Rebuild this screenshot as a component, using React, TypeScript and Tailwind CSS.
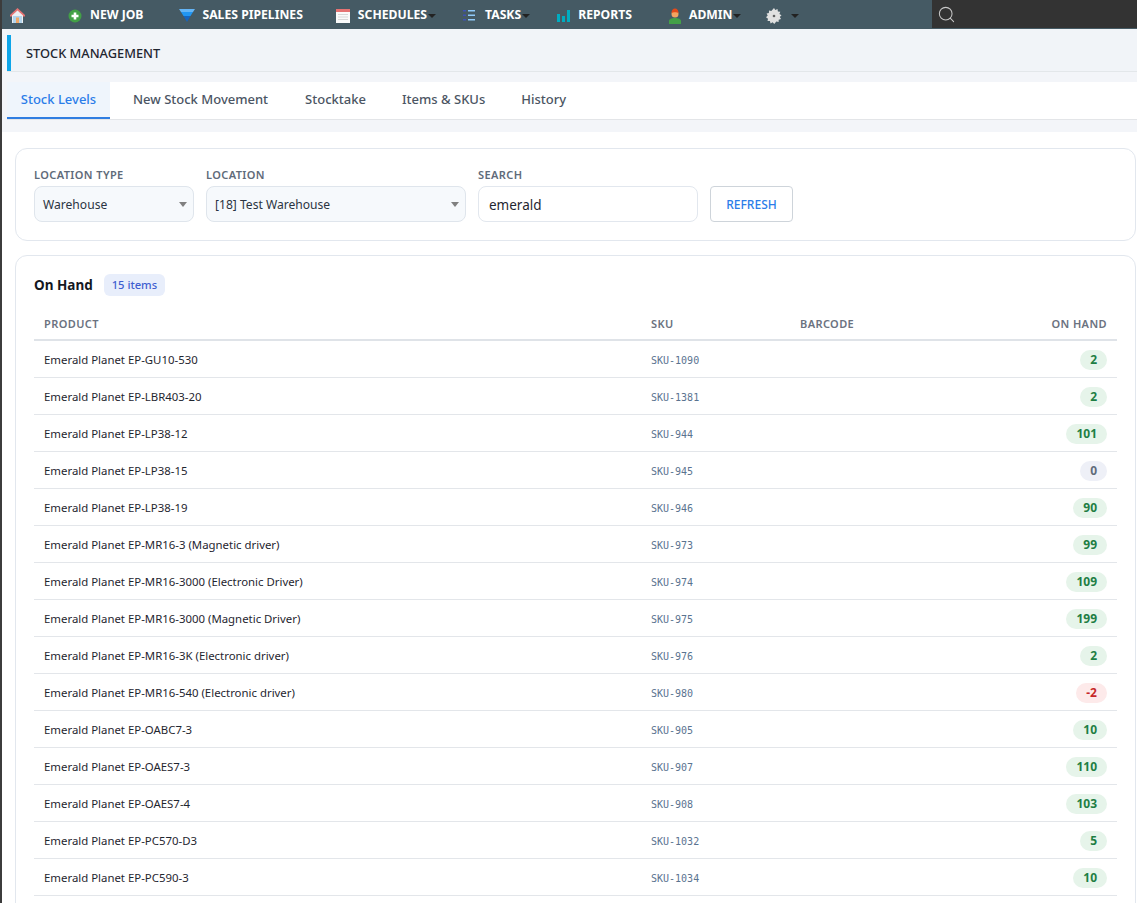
import { Search } from "lucide-react";

const rows = [
  { name: "Emerald Planet EP-GU10-530", sku: "SKU-1090", qty: 2 },
  { name: "Emerald Planet EP-LBR403-20", sku: "SKU-1381", qty: 2 },
  { name: "Emerald Planet EP-LP38-12", sku: "SKU-944", qty: 101 },
  { name: "Emerald Planet EP-LP38-15", sku: "SKU-945", qty: 0 },
  { name: "Emerald Planet EP-LP38-19", sku: "SKU-946", qty: 90 },
  { name: "Emerald Planet EP-MR16-3 (Magnetic driver)", sku: "SKU-973", qty: 99 },
  { name: "Emerald Planet EP-MR16-3000 (Electronic Driver)", sku: "SKU-974", qty: 109 },
  { name: "Emerald Planet EP-MR16-3000 (Magnetic Driver)", sku: "SKU-975", qty: 199 },
  { name: "Emerald Planet EP-MR16-3K (Electronic driver)", sku: "SKU-976", qty: 2 },
  { name: "Emerald Planet EP-MR16-540 (Electronic driver)", sku: "SKU-980", qty: -2 },
  { name: "Emerald Planet EP-OABC7-3", sku: "SKU-905", qty: 10 },
  { name: "Emerald Planet EP-OAES7-3", sku: "SKU-907", qty: 110 },
  { name: "Emerald Planet EP-OAES7-4", sku: "SKU-908", qty: 103 },
  { name: "Emerald Planet EP-PC570-D3", sku: "SKU-1032", qty: 5 },
  { name: "Emerald Planet EP-PC590-3", sku: "SKU-1034", qty: 10 },
];

function Caret() {
  return <span className="ml-[1px] mt-[1px] w-0 h-0 border-x-[4px] border-x-transparent border-t-[4px] border-t-[#222]" />;
}

function SelectBox({ label, value, width }: { label: string; value: string; width: string }) {
  return (
    <div className={width}>
      <div className="text-[11px] leading-[15px] font-semibold tracking-[0.4px] text-[#5f6b7a] mb-[4px]">{label}</div>
      <div className="h-[36px] rounded-[8px] border border-[#dfe5ec] bg-[#f6f9fc] flex items-center justify-between pl-[8px] pr-[6px] text-[12.100px] text-[#2b3442]">
        <span className="mt-[2px]">{value}</span>
        <span className="w-0 h-0 border-x-[4px] border-x-transparent border-t-[5px] border-t-[#808080]" />
      </div>
    </div>
  );
}

function QtyBadge({ qty }: { qty: number }) {
  const tone = qty < 0 ? "bg-[#fdeaea] text-[#c62828]" : qty === 0 ? "bg-[#eef0f7] text-[#5f6b7a]" : "bg-[#e6f4ea] text-[#1e7e44]";
  return <span className={`block w-fit ml-auto h-[20px] leading-[20px] rounded-full px-[10px] text-[12px] font-bold ${tone}`}>{qty}</span>;
}

export default function App() {
  return (
    <div className="relative h-[903px] overflow-hidden bg-white font-['Noto_Sans',sans-serif] text-[#1f2630]">
      {/* window edge */}
      <div className="absolute left-0 top-0 w-[2px] h-full bg-[#3c3c3c]" />

      <header className="h-[29px] bg-[#455a64] flex text-[12.200px] font-bold text-white">
        <div className="relative w-[932px] pt-[2px] flex items-center">
          <svg className="ml-[9px] w-[17px] h-[17px]" viewBox="0 0 17 17">
            <path d="M1 8 8.500 1 16 8v1.500H1z" fill="#e57373" />
            <path d="M3 8.500 8.500 3.500 14 8.500V16H3z" fill="#eceff1" />
            <path d="M4 9h9v7H4z" fill="#b3d4ec" />
            <path d="M7 10.500h3V16H7z" fill="#f0a868" />
          </svg>
          <svg className="ml-[42px] w-[14px] h-[14px]" viewBox="0 0 14 14">
            <circle cx="7" cy="7" r="6.500" fill="#43a047" />
            <path d="M5.700 3.500h2.600v2.200h2.200v2.600H8.300v2.200H5.700V8.300H3.500V5.700h2.200z" fill="#fff" />
          </svg>
          <span className="ml-[8px]">NEW JOB</span>
          <svg className="ml-[36px] w-[16px] h-[13px]" viewBox="0 0 16 13">
            <path d="M0 0h16l-2 3H2z" fill="#64b5f6" />
            <path d="M2 3h12l-2.500 4h-7z" fill="#2196f3" />
            <path d="M4.500 7h7L8 13z" fill="#1565c0" />
          </svg>
          <span className="ml-[7px]">SALES PIPELINES</span>
          <svg className="ml-[33px] w-[14px] h-[14px]" viewBox="0 0 14 14">
            <path d="M0 0h14v14H0z" fill="#fafafa" />
            <path d="M0 0h14v3H0z" fill="#e57373" />
            <path d="M2 5h10v1H2zM2 7.500h10v1H2zM2 10h10v1H2z" fill="#d7d7d7" />
          </svg>
          <span className="ml-[8px]">SCHEDULES</span>
          <Caret />
          <svg className="ml-[26px] w-[14px] h-[13px]" viewBox="0 0 14 13">
            <path d="M1 1h3v1.500H1zM1 5.500h3V7H1zM1 10h3v1.500H1z" fill="#3f51b5" />
            <path d="M6 1h7v1.500H6zM6 5.500h7V7H6zM6 10h7v1.500H6z" fill="#90caf9" />
          </svg>
          <span className="ml-[9px]">TASKS</span>
          <Caret />
          <svg className="ml-[27px] w-[13px] h-[13px]" viewBox="0 0 13 13">
            <path d="M0 5h3v8H0zM5 7h3v6H5zM10 1h3v12h-3z" fill="#00acc1" />
          </svg>
          <span className="ml-[8px]">REPORTS</span>
          <svg className="ml-[36px] w-[14px] h-[16px]" viewBox="0 0 14 16">
            <path d="M1 16v-3c0-2 3-3 6-3s6 1 6 3v3z" fill="#43a047" />
            <circle cx="7" cy="6" r="3.500" fill="#f4a460" />
            <path d="M3.500 5C3.500 2 5 .5 7 .5S10.500 2 10.500 5C9 4 5 4 3.500 5z" fill="#e64a19" />
          </svg>
          <span className="ml-[7px]">ADMIN</span>
          <Caret />
          <svg className="ml-[25px] w-[16px] h-[16px]" viewBox="0 0 16 16">
            <path d="M8 0l1.300 2 2.200-1 .4 2.400 2.400.3-.9 2.200 2.100 1.300-1.700 1.700 1.200 2-2.300.8-.1 2.400-2.300-.5L8.300 16l-1.700-1.700-2 1.100-.7-2.300-2.400-.1.500-2.300L0 9.300l1.700-1.700L.6 5.600l2.300-.7.100-2.400 2.300.5z" fill="#e0e0e0" />
            <circle cx="8" cy="8" r="1.300" fill="#616161" />
          </svg>
          <span className="ml-[9px] w-0 h-0 border-x-[4px] border-x-transparent border-t-[4px] border-t-[#222]" />
        </div>
        <div className="flex-1 bg-[#333333] h-[28px] flex items-center pl-[5px] text-[#c8c8c8]">
          <Search size={19} strokeWidth={1.3} />
        </div>
      </header>

      <div className="bg-[#f3f5f9] pl-[7px] pb-[12px]">
        <div className="h-[43px] pt-[6px] border-b border-[#e3e7ea] bg-[#f1f4f8]">
          <div className="h-[36px] border-l-[4px] border-l-[#0ea5e9] flex items-center pl-[15px] pt-[1px] text-[12.800px] font-medium text-[#1f2630]">
            STOCK MANAGEMENT
          </div>
        </div>
        <nav className="mt-[10px] h-[38px] bg-white border-b border-[#e3e5e8] flex text-[13px] font-medium text-[#4b5563]">
          <div className="w-[103px] h-[37px] bg-[#eff5fc] border-b-[2px] border-[#2f7de1] text-[#2b7de9] flex items-center justify-center">Stock Levels</div>
          <div className="ml-[23px] h-[35px] flex items-center">New Stock Movement</div>
          <div className="ml-[37px] h-[35px] flex items-center">Stocktake</div>
          <div className="ml-[36px] h-[35px] flex items-center">Items &amp; SKUs</div>
          <div className="ml-[36px] h-[35px] flex items-center">History</div>
        </nav>
      </div>

      <main className="pl-[15px] pt-[16px]">
        <section className="h-[93px] w-[1121px] rounded-[12px] border border-[#e2e7ee] bg-white pl-[18px] pt-[18px] flex gap-[12px]">
          <SelectBox label="LOCATION TYPE" value="Warehouse" width="w-[160px]" />
          <SelectBox label="LOCATION" value="[18] Test Warehouse" width="w-[260px]" />
          <div className="w-[220px]">
            <div className="text-[11px] leading-[15px] font-semibold tracking-[0.4px] text-[#5f6b7a] mb-[4px]">SEARCH</div>
            <div className="h-[36px] rounded-[8px] border border-[#e2e7ee] bg-white flex items-center pl-[10px] pt-[2px] text-[13.500px] text-[#1f2630]">emerald</div>
          </div>
          <button className="mt-[19px] h-[36px] w-[83px] pt-[2px] rounded-[4px] border border-[#ced4da] bg-white text-[12px] font-medium text-[#2b7de9]">REFRESH</button>
        </section>

        <section className="mt-[14px] w-[1121px] rounded-[12px] border border-[#e2e7ee] bg-white pl-[18px] pr-[18px] pt-[18px] pb-[40px]">
          <div className="flex items-center h-[22px]">
            <span className="text-[13.500px] font-bold text-[#14181f]">On Hand</span>
            <span className="ml-[11px] h-[22px] leading-[22px] rounded-[6px] bg-[#e8eefb] px-[8px] text-[11.200px] font-medium text-[#3f5fd0]">15 items</span>
          </div>
          <table className="mt-[7px] w-full table-fixed border-collapse">
            <thead>
              <tr className="h-[37px] border-b-[2px] border-[#dfe3e8] text-[11px] tracking-[0.4px] text-[#6b7280]">
                <th className="w-[617px] pl-[10px] pt-[6px] text-left font-semibold">PRODUCT</th>
                <th className="w-[149px] pt-[6px] text-left font-semibold">SKU</th>
                <th className="pt-[6px] text-left font-semibold">BARCODE</th>
                <th className="w-[120px] pr-[10px] pt-[6px] text-right font-semibold">ON HAND</th>
              </tr>
            </thead>
            <tbody>
              {rows.map((r) => (
                <tr key={r.sku} className="h-[37px] border-b border-[#e3e6ea]">
                  <td className="pl-[10px] pt-[2px] text-[11.400px] text-[#1f2630]">{r.name}</td>
                  <td className="pt-[4px] font-['DejaVu_Sans_Mono',monospace] text-[10px] text-[#5a7390]">{r.sku}</td>
                  <td />
                  <td className="pr-[10px] pt-[2px]"><QtyBadge qty={r.qty} /></td>
                </tr>
              ))}
            </tbody>
          </table>
        </section>
      </main>
    </div>
  );
}
